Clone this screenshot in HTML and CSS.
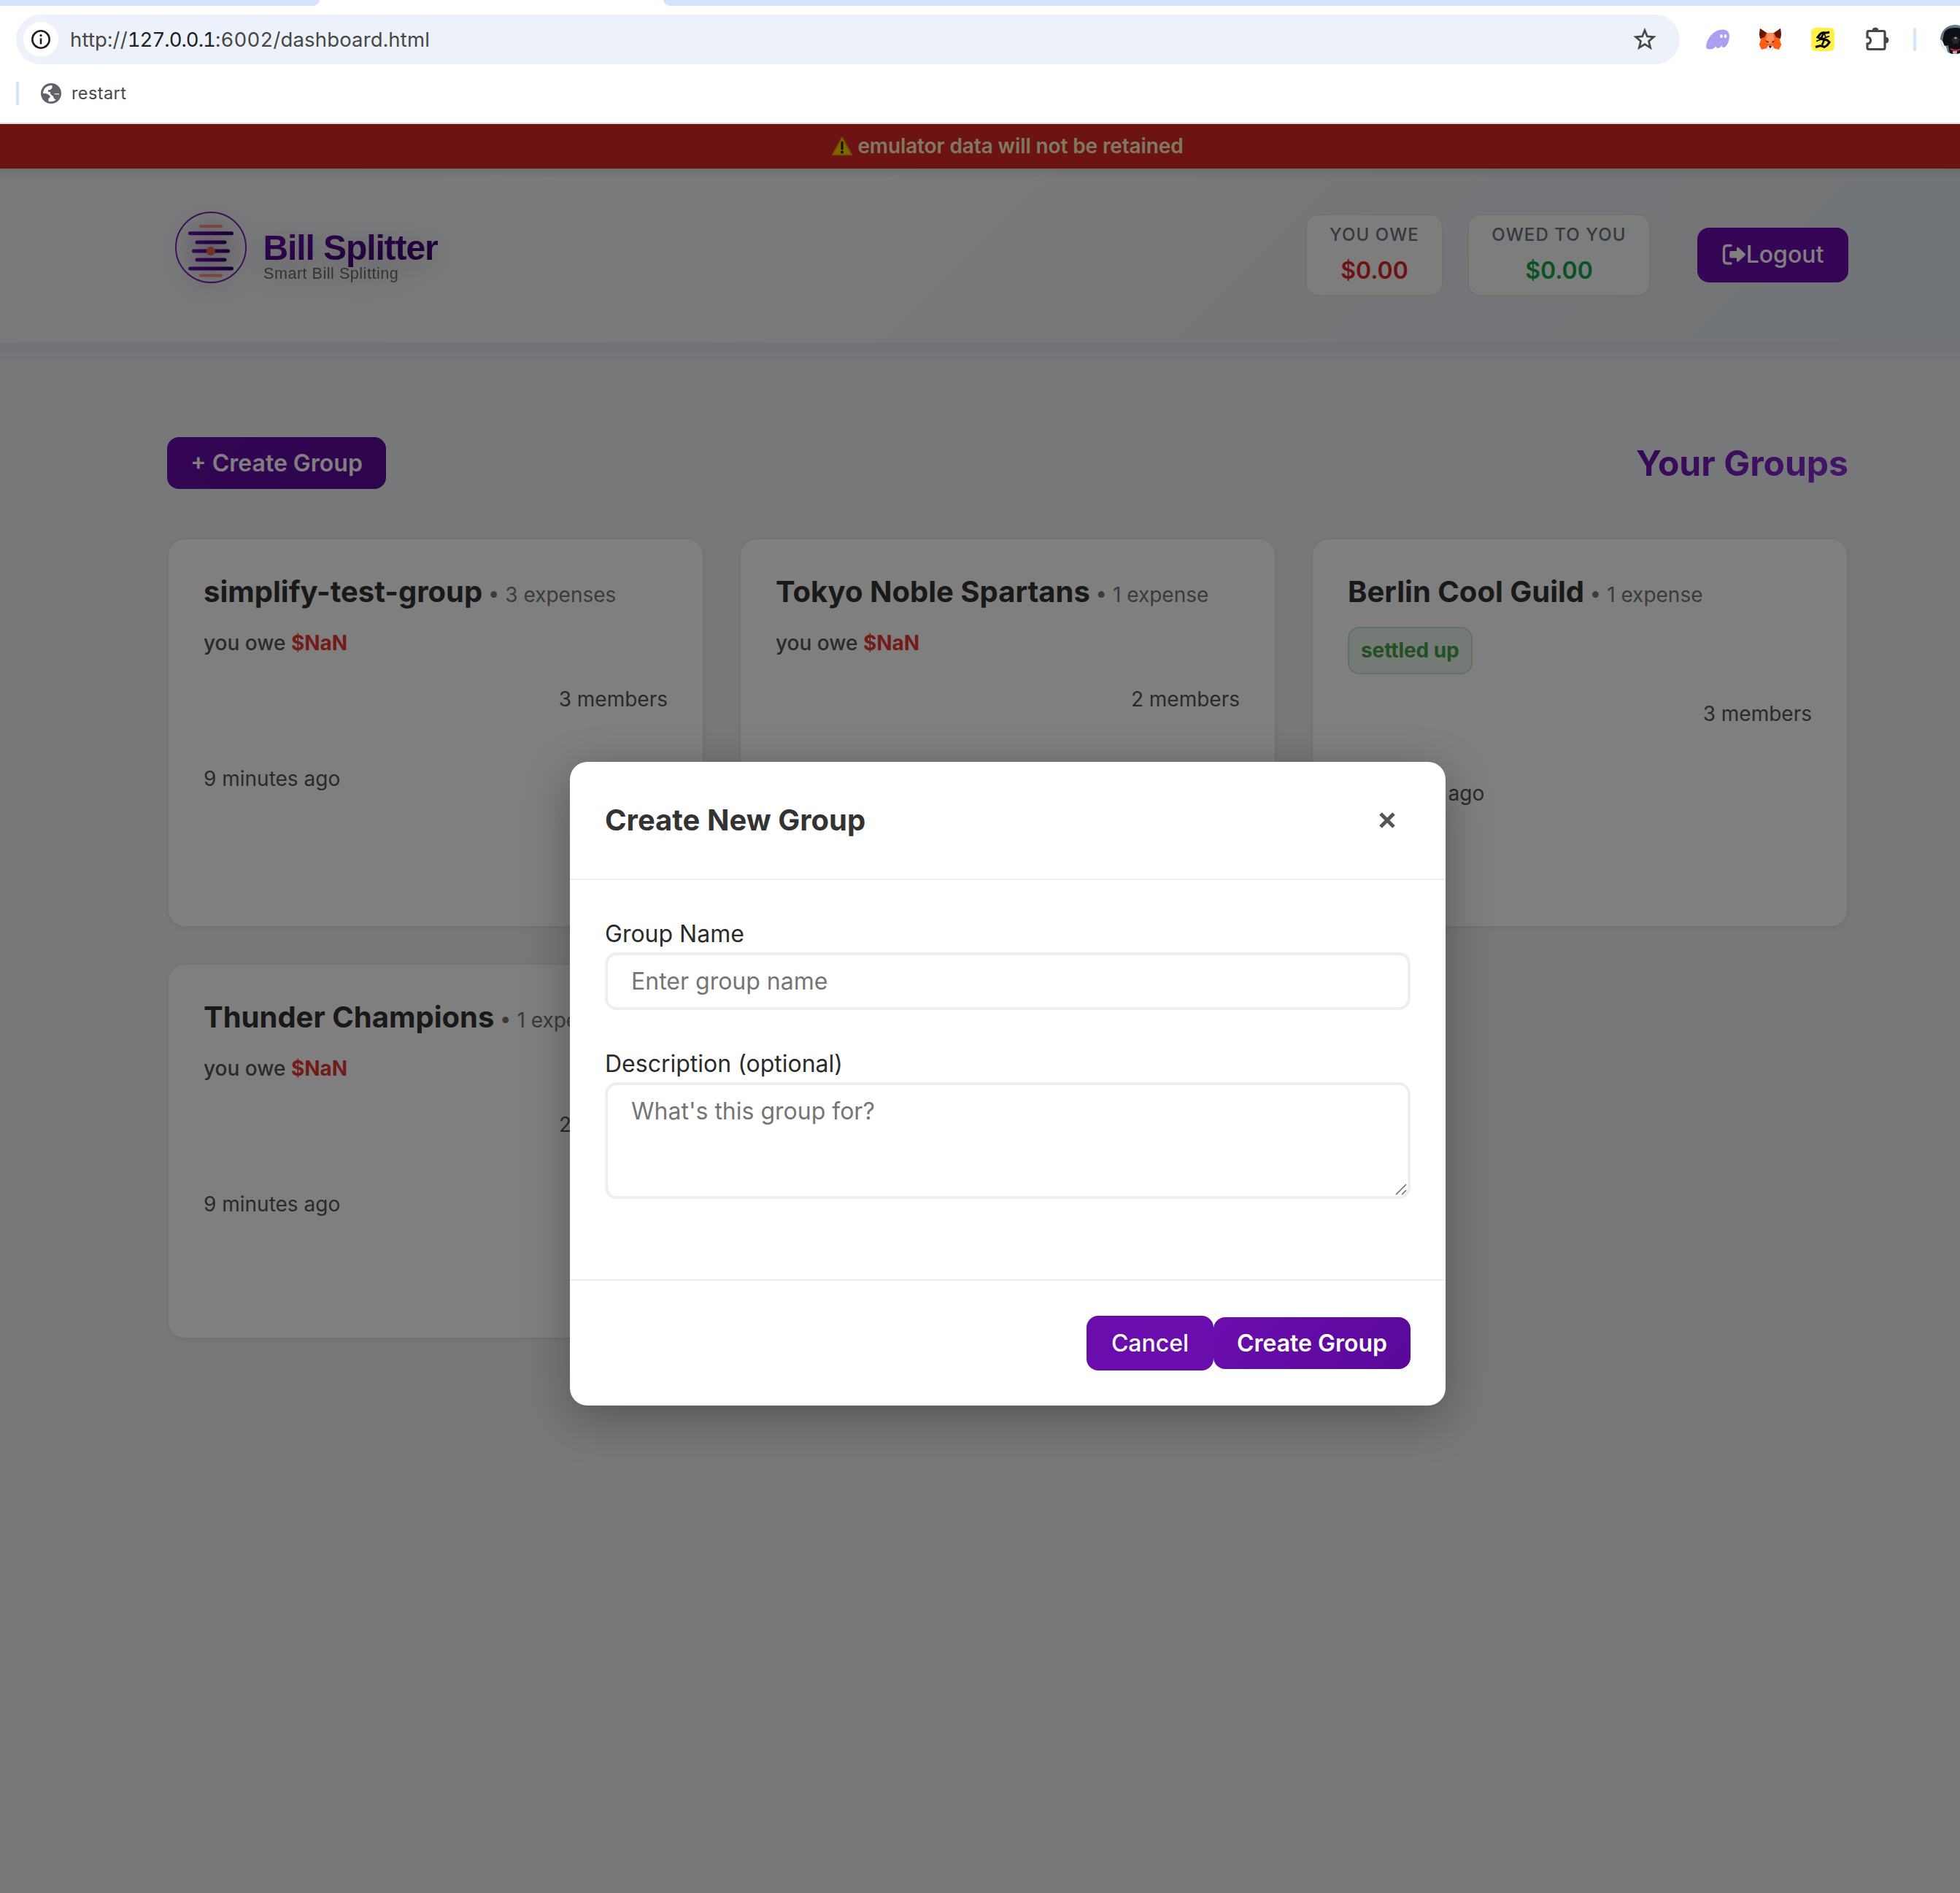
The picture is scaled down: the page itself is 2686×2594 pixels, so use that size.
FILE: index.html
```html
<!DOCTYPE html>
<html lang="en">
<head>
<meta charset="utf-8">
<title>Bill Splitter</title>
<link rel="stylesheet" href="styles.css">
</head>
<body>
<header class="chrome">
  <div class="tabstrip"><span class="tab-left"></span><span class="tab-right"></span></div>
  <div class="toolbar">
    <div class="omnibox">
      <span class="site-info"><svg width="28" height="28" viewBox="0 0 28 28"><circle cx="14" cy="14" r="11.7" fill="none" stroke="#1f1f1f" stroke-width="2.6"/><path d="M14 12.5v8" stroke="#1f1f1f" stroke-width="2.6"/><circle cx="14" cy="8.6" r="1.6" fill="#1f1f1f"/></svg></span>
      <span class="url">http://<b>127.0.0.1</b>:6002/dashboard.html</span>
      <svg class="star" width="32" height="32" viewBox="0 0 32 32"><path d="M16 3.5l3.4 8.4 9 .7-6.9 5.9 2.2 8.8L16 22.6l-7.7 4.7 2.2-8.8-6.9-5.9 9-.7z" fill="none" stroke="#474747" stroke-width="2.7"/></svg>
    </div>
    <div class="extensions">
      <svg width="32" height="32" viewBox="0 0 32 32"><path d="M0 26C1 14 11 2.500 23 2.500c6 0 9 4 9 9C32 19 28 27 24 27c-2 0-2-1.500-2.500-2.500C20 26.500 18 28 16 28c-2 0-2-1.500-2-3-2 2.500-5 4.500-9 4.500-3 0-5-1-5-3.500z" fill="#ab9ff2"/><ellipse cx="21" cy="11.500" rx="1.800" ry="2.500" fill="#fff"/><ellipse cx="26.500" cy="11.500" rx="1.800" ry="2.500" fill="#fff"/></svg>
      <svg width="30" height="30" viewBox="0 0 30 30"><path d="M1 0l9 6h10l9-6 1 8-2 8 2 6-3 7-7-2-3 3h-4l-3-3-7 2-3-7 2-6-2-8z" fill="#ff5c16"/><path d="M1 0l9 6-3 6-6 2-1-6zM29 0l-9 6 3 6 6 2 1-6z" fill="#661800"/><path d="M11 6h8l2 10-3 5h-6l-3-5z" fill="#ff8d5d"/><path d="M0 22l2-5 8 4 1 6-8 1zM30 22l-2-5-8 4-1 6 8 1z" fill="#ff5c16"/><path d="M8 16l5 2-1 2zM22 16l-5 2 1 2z" fill="#661800"/><path d="M11 25l2-2h4l2 2 1 2-3 3h-4l-3-3z" fill="#e7ebf6"/><path d="M13 23.500h4l-1 3h-2z" fill="#200"/></svg>
      <svg width="32" height="32" viewBox="0 0 32 32"><rect width="32" height="32" rx="6" fill="#ffef46"/><g fill="none" stroke="#000"><path d="M25 6q-4 1.500-7 .8-3-.7-5.500 1.700L9 13l5 2.500 8 1.500 3 3-3 4-4 2.500q-4-2.500-7-1.500l-5 1.500" stroke-width="3"/><path d="M17 8l-3 5.500 4 3-3 7" stroke-width="2.600"/><path d="M7 18.500l18-7M20 13l-2-5" stroke-width="1.700"/></g></svg>
      <svg width="34" height="34" viewBox="0 0 34 34"><path d="M4 5.500h22q2 0 2 2v21q0 2-2 2H6q-2 0-2-2v-5.500c6 0 6-9 0-9V7.500q0-2 2-2z" fill="none" stroke="#474747" stroke-width="3.200"/><path d="M11 5a4 4 0 0 1 8 0zM29 14a4 4 0 0 1 0 8z" fill="#474747" stroke="#474747"/></svg>
      <span class="divider"></span>
      <svg class="avatar" width="40" height="40" viewBox="0 0 40 40"><defs><clipPath id="av"><circle cx="20" cy="20" r="20"/></clipPath></defs><g clip-path="url(#av)"><rect width="40" height="40" fill="#5c7c86"/><path d="M0 20l6 4 5 16H0z" fill="#eef0ee"/><path d="M5 12Q8 3 22 4q12 0 14 12l4 24H13l-2-12-5 1-3-7z" fill="#0e0f12"/><path d="M15 20q5-8 12 0l-3 6h-6z" fill="#23262c"/><ellipse cx="21" cy="18" rx="2" ry="1.500" fill="#8a929c"/><path d="M14 33q10 5 18-3" stroke="#c02c48" stroke-width="2" fill="none"/><path d="M17 36h6v4h-6z" fill="#b9aca4"/></g></svg>
    </div>
  </div>
  <div class="bookmarks">
    <span class="divider"></span>
    <svg width="28" height="28" viewBox="0 0 28 28"><circle cx="14" cy="14" r="14" fill="#5f6368"/><path d="M15.500 3C8 2.500 3 8 3 14l5 .3 4.500 3v2.700l-2 .5v4.500C18 26.500 25 22 25 14.300h-5.500L16 15l-3-.3V12H10V9.500l3-.5 2.500-2.500z" fill="#fff"/><path d="M14 11l4 3.500 2 1h5q-.5 5-4 7.500l-3-2-1-3-3-2.500z" fill="#5f6368"/></svg>
    <span class="bookmark">restart</span>
  </div>
</header>

<div class="viewport">
<div class="page">
  <div class="banner"><svg width="28" height="26" viewBox="0 0 28 26"><path d="M14 1.500L27 25H1z" fill="#ffcc00" stroke="#e0a800" stroke-width="2" stroke-linejoin="round"/><path d="M14 8v9" stroke="#222" stroke-width="3.200" stroke-linecap="round"/><circle cx="14" cy="21.500" r="1.900" fill="#222"/></svg><span>emulator data will not be retained</span></div>

  <header class="app-header">
    <svg class="logo" width="440" height="140" viewBox="0 0 440 140">
      <defs>
        <linearGradient id="lg" x1="0" y1="0" x2="1" y2="1"><stop offset="0" stop-color="#6a0dad"/><stop offset="1" stop-color="#34005c"/></linearGradient>
        <linearGradient id="lh" gradientUnits="userSpaceOnUse" x1="28" y1="0" x2="92" y2="0"><stop offset="0" stop-color="#6a0dad"/><stop offset="1" stop-color="#34005c"/></linearGradient>
        <radialGradient id="rg"><stop offset="0" stop-color="#6a0dad" stop-opacity=".16"/><stop offset="1" stop-color="#6a0dad" stop-opacity="0"/></radialGradient>
      </defs>
      <circle cx="60" cy="65" r="46" fill="url(#rg)"/>
      <circle cx="60" cy="65" r="48" fill="none" stroke="#7b22b8" stroke-width="2"/>
      <g fill="url(#lh)"><rect x="29" y="43.300" width="62" height="5" rx="2.500"/><rect x="38.500" y="55.500" width="43" height="5" rx="2.500"/><rect x="34" y="67.500" width="52" height="5" rx="2.500"/><rect x="38.500" y="79.500" width="43" height="5" rx="2.500"/><rect x="29" y="91.500" width="62" height="5" rx="2.500"/></g>
      <g fill="#ff6b5b" fill-opacity=".75"><rect x="44" y="34" width="32" height="4" rx="2"/><rect x="44" y="101.500" width="32" height="4" rx="2"/></g>
      <circle cx="60" cy="70" r="6" fill="#e8604f"/>
      <text x="131.500" y="82" class="logo-name" fill="url(#lg)">Bill Splitter</text>
      <text x="132" y="107.500" class="logo-tag">Smart Bill Splitting</text>
    </svg>
    <div class="summary">
      <div class="stat"><span class="stat-label">YOU OWE</span><span class="stat-value owe">$0.00</span></div>
      <div class="stat"><span class="stat-label">OWED TO YOU</span><span class="stat-value owed">$0.00</span></div>
      <button class="btn logout"><svg width="33" height="30" viewBox="0 0 33 30"><path d="M12 2.500H7Q2.500 2.500 2.500 7v15.500Q2.500 27 7 27h5" fill="none" stroke="#fff" stroke-width="3.400" stroke-linecap="round"/><path d="M12 10h8V5.500q1-1.500 2.500-.3l9 8.300q1 1.200 0 2.400l-9 8.300q-1.500 1.200-2.500-.3V19.500h-8q-1.800 0-1.800-1.800v-6q0-1.700 1.800-1.700z" fill="#fff"/></svg>Logout</button>
    </div>
  </header>

  <main>
    <div class="heading">
      <button class="btn primary create">+ Create Group</button>
      <h1>Your Groups</h1>
    </div>
    <div class="grid">
      <article class="card"><h2>simplify-test-group <small>• 3 expenses</small></h2><p class="balance">you owe <b>$NaN</b></p><p class="members">3 members</p><p class="time">9 minutes ago</p></article>
      <article class="card"><h2>Tokyo Noble Spartans <small>• 1 expense</small></h2><p class="balance">you owe <b>$NaN</b></p><p class="members">2 members</p></article>
      <article class="card"><h2>Berlin Cool Guild <small>• 1 expense</small></h2><p class="settled">settled up</p><p class="members">3 members</p><p class="time">9 minutes ago</p></article>
      <article class="card"><h2>Thunder Champions <small>• 1 expense</small></h2><p class="balance">you owe <b>$NaN</b></p><p class="members">2 members</p><p class="time">9 minutes ago</p></article>
    </div>
  </main>

  <div class="overlay">
    <section class="modal">
      <div class="modal-head"><h3>Create New Group</h3><button class="close" aria-label="Close"><svg width="24" height="24" viewBox="0 0 24 24"><path d="M3 3l18 18M21 3L3 21" stroke="#555" stroke-width="5"/></svg></button></div>
      <form class="modal-body">
        <label for="name">Group Name</label>
        <input id="name" type="text" placeholder="Enter group name">
        <label for="desc">Description (optional)</label>
        <div class="area"><textarea id="desc" placeholder="What's this group for?"></textarea><svg class="grip" width="16" height="16" viewBox="0 0 16 16"><path d="M1 15L15 1M9 15l6-6" stroke="#666" stroke-width="1.500"/></svg></div>
      </form>
      <div class="modal-foot"><button class="btn cancel">Cancel</button><button class="btn primary submit">Create Group</button></div>
    </section>
  </div>
</div>
</div>
</body>
</html>
```

FILE: styles.css
```css
* { box-sizing: border-box; }
body { margin: 0; height: 2594px; overflow: hidden; display: flex; flex-direction: column; font-family: Inter, sans-serif; background: #fff; }
h1, h2, h3, p { margin: 0; }
svg { display: block; flex: none; }
button, input, textarea { font-family: inherit; }

/* browser chrome */
.chrome { height: 170px; flex: none; border-bottom: 2px solid #e0e0e0; overflow: hidden; }
.tabstrip { height: 8px; display: flex; justify-content: space-between; }
.tab-left, .tab-right { background: #d3e3fd; height: 8px; }
.tab-left { width: 438px; border-bottom-right-radius: 18px 14px; }
.tab-right { width: 1777px; border-bottom-left-radius: 18px 14px; }
.toolbar { display: flex; align-items: center; margin-top: 12px; padding-left: 22px; }
.omnibox { width: 2280px; height: 68px; flex: none; border-radius: 34px; background: #ecf1fa; display: flex; align-items: center; padding: 0 32px 0 10px; }
.site-info { width: 48px; height: 48px; border-radius: 50%; background: #fff; display: flex; align-items: center; justify-content: center; }
.url { margin-left: 16px; font-size: 27.5px; letter-spacing: .16px; font-feature-settings: "tnum"; color: #474747; }
.url b { font-weight: 400; letter-spacing: -1px; color: #1f1f1f; }
.star { margin-left: auto; }
.extensions { display: flex; align-items: center; margin-left: 36px; gap: 41px; flex: none; }
.extensions .divider { margin: 0 -8px 0 -8px; }
.divider { width: 4px; height: 32px; border-radius: 2px; background: #d3e3fd; flex: none; }
.bookmarks { height: 80px; display: flex; align-items: center; padding: 0 0 0 22px; }
.bookmarks svg { margin-left: 30px; }
.bookmark { margin: -2px 0 0 14px; font-size: 23.5px; letter-spacing: .4px; color: #474747; }

/* application page, wider than the visible window */
.viewport { flex: 1; overflow: hidden; }
.page { position: relative; width: 2762px; height: 2424px; background: #eff1f4; }
.banner { height: 61px; background: #dc2626; display: flex; align-items: center; justify-content: center; gap: 7px; color: #fff3c4; font-size: 28px; font-weight: 600; letter-spacing: -.12px; }
.banner svg { margin-top: -2px; }
.banner span { margin-top: -1px; }
.app-header { height: 238px; padding: 0 229px 2px; display: flex; align-items: center; justify-content: space-between; background: linear-gradient(rgba(0,0,0,.08), transparent 14px), linear-gradient(135deg, #f2f3f6 0%, #f2f4f6 40%, #e9ebf0 70%, #e2e9ee 100%); }
.logo { overflow: visible; margin-top: -10px; filter: drop-shadow(0 8px 20px rgba(0,0,0,.2)); }
.logo-name { font: bold 48px "Liberation Sans", Arial, sans-serif; letter-spacing: -1.1px; }
.logo-tag { font: 21.6px "Liberation Sans", Arial, sans-serif; letter-spacing: .5px; fill: #666; }
.summary { display: flex; align-items: center; }
.stat { height: 113px; margin-right: 33px; border: 2px solid rgba(120,120,120,.06); border-radius: 18px; background: rgba(255,255,255,.75); background-clip: padding-box; display: flex; flex-direction: column; align-items: center; padding-top: 11px; width: 189px; }
.stat + .stat { width: 251px; margin-right: 64px; }
.stat-label { font-size: 24px; line-height: 31px; font-weight: 500; letter-spacing: 1.1px; color: #6b7280; }
.stat-value { margin-top: 14px; font-size: 32px; line-height: 40px; font-weight: 600; }
.owe { color: #dc2626; }
.owed { color: #16a34a; }
.btn { border: 0; border-radius: 16px; padding: 0; color: #fff; background: #6a0dad; font-size: 32px; line-height: 38px; display: flex; align-items: center; justify-content: center; }
.logout { width: 207px; height: 75px; font-weight: 500; }
.primary { height: 71px; font-weight: 600; background: linear-gradient(135deg, #6a0dad, #5a0899); }
main { padding: 130px 229px 0; background: linear-gradient(#e4e5ef, #edeff4 28px, #eff1f4 40px); }
.heading { display: flex; align-items: center; justify-content: space-between; }
.create { width: 300px; }
h1 { font-size: 48px; line-height: 58px; font-weight: 700; background: linear-gradient(135deg, #6a0dad, #8b2fd0); -webkit-background-clip: text; color: transparent; }
.grid { margin-top: 67px; display: grid; grid-template-columns: repeat(3, 736px); gap: 49px 48px; }
.card { border: 2px solid rgba(0,0,0,.03); border-radius: 24px; background: #fff; background-clip: padding-box; padding: 48px 48px 160px; box-shadow: 0 2px 8px rgba(0,0,0,.04); color: #555; font-size: 28px; line-height: 44.8px; }
.card h2 { font-size: 40px; line-height: 48px; margin-bottom: 24px; font-weight: 700; color: #333; white-space: nowrap; }
.card small { font-size: 28px; line-height: 1; font-weight: 400; color: #777; margin-left: -2px; }
.balance { font-weight: 500; }
.balance b { font-weight: 700; color: #e53935; }
.settled { width: max-content; border: 2px solid #c5e2c7; border-radius: 16px; background: #edf4ed; padding: 8px 16px; font-weight: 700; letter-spacing: -.1px; color: #43a047; }
.members { margin-top: 32px; text-align: right; }
.time { margin-top: 64px; }

/* dialog */
.overlay { position: absolute; inset: 0; z-index: 2; background: rgba(0,0,0,.5); display: flex; justify-content: center; align-items: flex-start; padding-top: 874px; }
.modal { width: 1200px; height: 882px; border-radius: 24px; background: #fff; display: flex; flex-direction: column; box-shadow: 0 16px 64px rgba(0,0,0,.3); }
.modal-head { height: 162px; flex: none; border-bottom: 2px solid #eee; padding: 0 68px 1px 48px; display: flex; align-items: center; justify-content: space-between; }
h3 { font-size: 40px; line-height: 48px; font-weight: 700; color: #333; }
.close { border: 0; padding: 0; background: none; }
.modal-body { flex: 1; padding: 48px; display: flex; flex-direction: column; }
label { font-size: 32px; line-height: 51px; font-weight: 400; color: #2b2b2b; }
input, textarea { display: block; width: 100%; border: 4px solid #eee; border-radius: 16px; padding: 0 32px; font-size: 32px; line-height: 38px; color: #333; }
input { height: 79px; margin-bottom: 48px; flex: none; }
textarea { height: 160px; padding-top: 17px; resize: none; overflow: hidden; }
input::placeholder, textarea::placeholder { color: #757575; }
.area { position: relative; }
.grip { position: absolute; right: 5px; bottom: 5px; }
.modal-foot { height: 173px; flex: none; border-top: 2px solid #eee; padding: 0 48px; display: flex; align-items: center; justify-content: flex-end; }
.cancel { width: 174px; height: 75px; font-weight: 500; }
.submit { width: 270px; }
```
